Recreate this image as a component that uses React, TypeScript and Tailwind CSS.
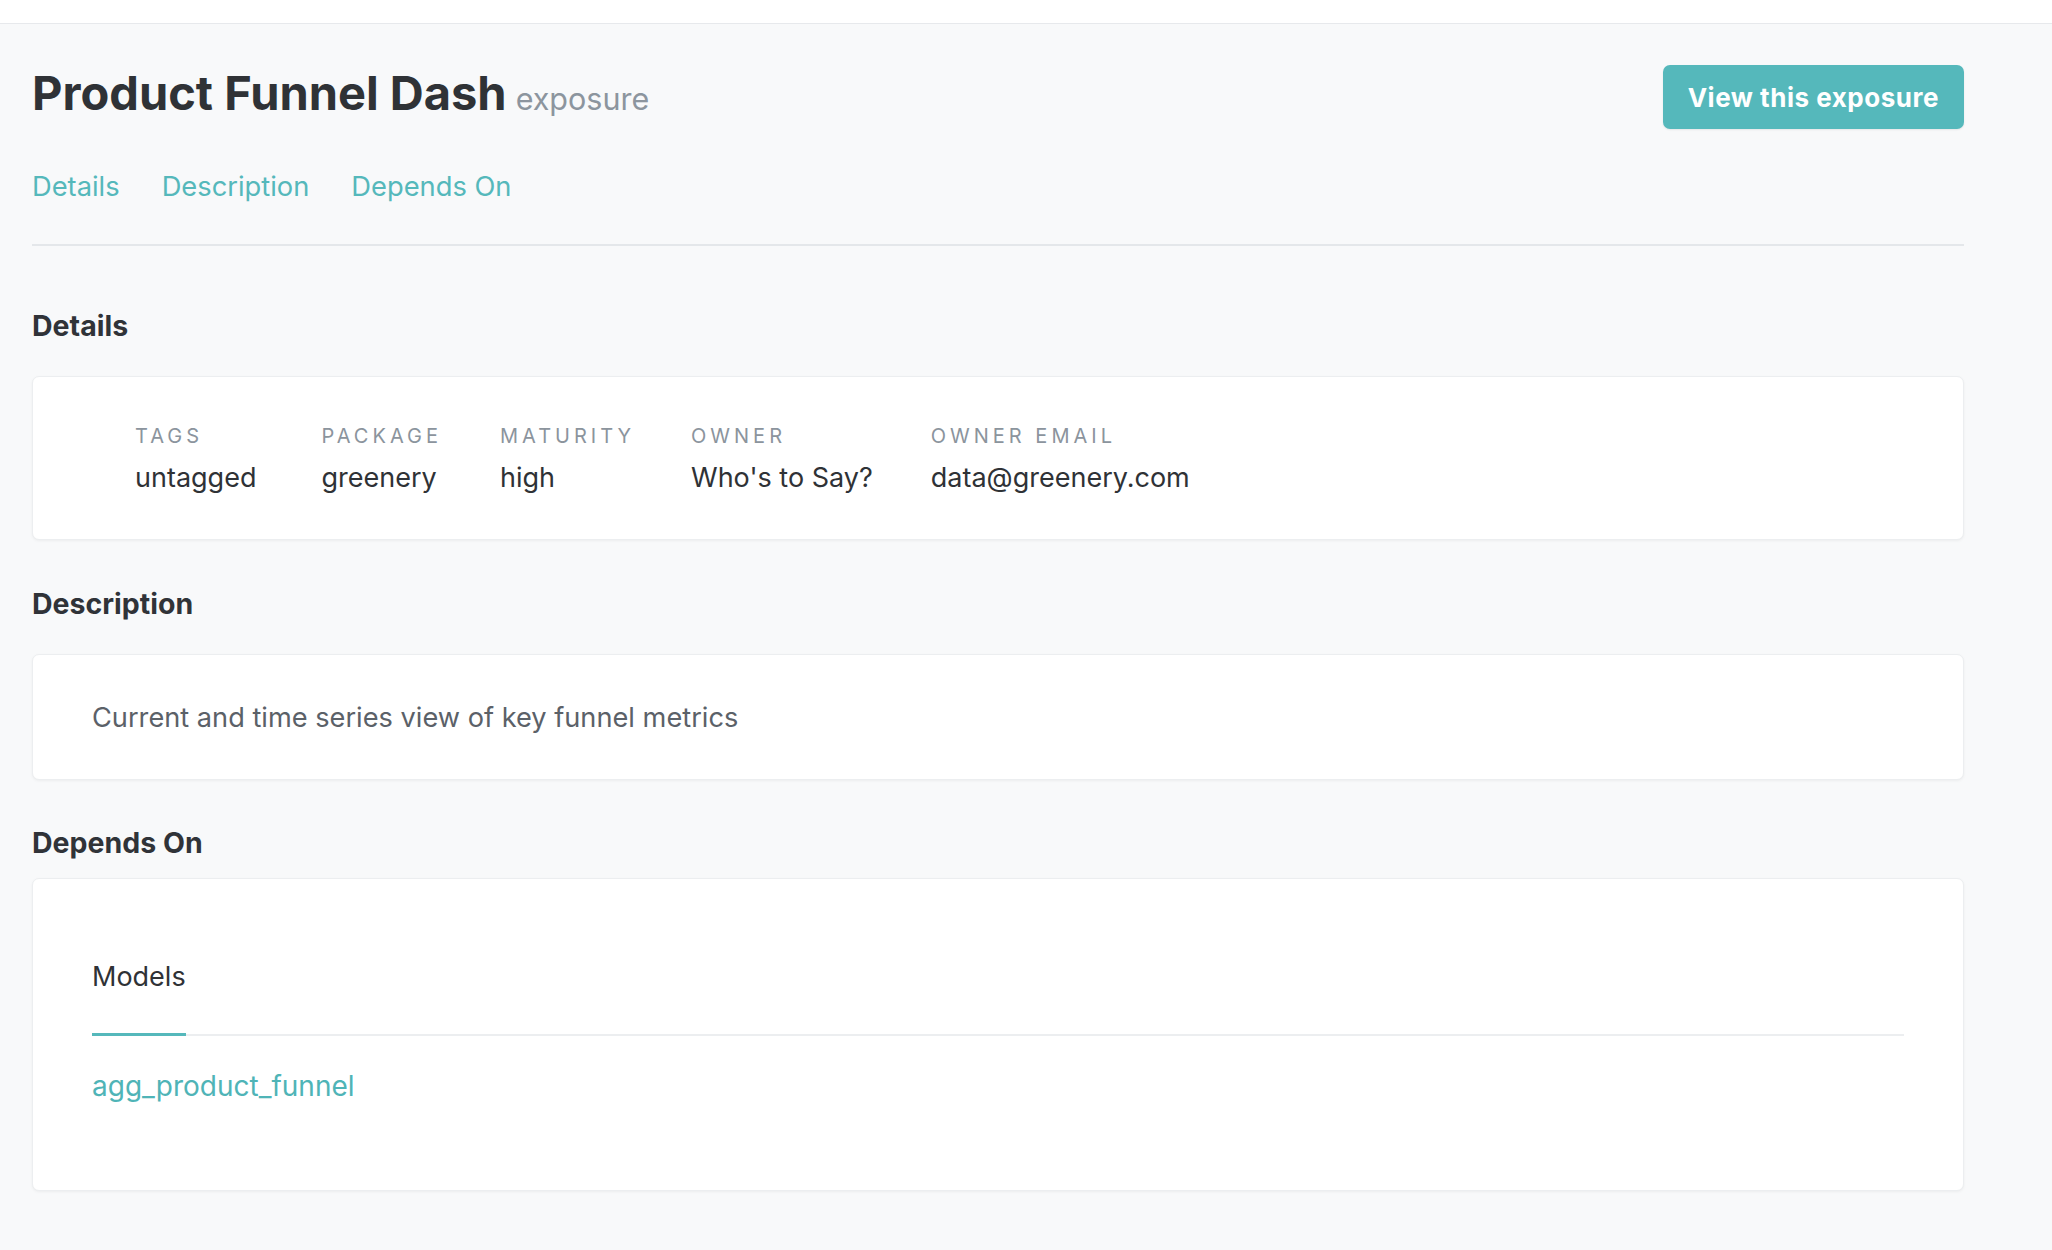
const details = [
  { label: 'Tags', value: 'untagged', gap: 'mr-[65px]' },
  { label: 'Package', value: 'greenery', gap: 'mr-[58px]' },
  { label: 'Maturity', value: 'high', gap: 'mr-[56px]' },
  { label: 'Owner', value: "Who's to Say?", gap: 'mr-[58px]' },
  { label: 'Owner Email', value: 'data@greenery.com', gap: 'mr-[58px]' },
]

const card = 'rounded-[7px] border border-[#eceef0] bg-white shadow-[0_1px_3px_rgba(0,0,0,0.05)]'

export default function App() {
  return (
    <div className="min-h-screen bg-[#f8f9fa] font-['Inter','Noto_Sans',sans-serif] text-[#303338]">
      <div className="h-[24px] border-b border-[#e7e9ec] bg-white" />

      <main className="pl-[32px] pr-[88px] pt-[41px] pb-[58px]">
        <header className="flex items-start justify-between">
          <div className="flex items-baseline gap-[9px]">
            <h1 className="text-[47px] leading-[56px] font-bold text-[#2f3236]">Product Funnel Dash</h1>
            <span className="text-[30.5px] leading-[40px] text-[#8c959e]">exposure</span>
          </div>
          <button className="h-[64px] rounded-[7px] bg-[#55b8bb] px-[25px] text-[26px] font-bold tracking-[0.02em] text-white shadow-[0_1px_2px_rgba(0,0,0,0.08)]">
            View this exposure
          </button>
        </header>

        <nav className="mt-[40px] flex gap-[42px] text-[27.3px] leading-[36px] text-[#55b8bb]">
          <a>Details</a>
          <a>Description</a>
          <a>Depends On</a>
        </nav>

        <div className="mt-[39px] h-[2px] bg-[#e4e7ea]" />

        <section className="mt-[64px]">
          <h2 className="text-[28.5px] leading-[32px] font-bold">Details</h2>
          <div className={`${card} mt-[34px] flex pl-[102px] pt-[45px] pb-[43px]`}>
            {details.map((d) => (
              <div key={d.label} className={d.gap}>
                <div className="text-[20px] leading-[28px] uppercase tracking-[0.2em] text-[#8b949d]">{d.label}</div>
                <div className="mt-[10px] text-[27px] leading-[36px] text-[#2f3236]">{d.value}</div>
              </div>
            ))}
          </div>
        </section>

        <section className="mt-[48px]">
          <h2 className="text-[28.5px] leading-[32px] font-bold">Description</h2>
          <div className={`${card} mt-[34px] px-[59px] pt-[45px] pb-[43px]`}>
            <p className="text-[27.2px] leading-[36px] text-[#5b6168]">Current and time series view of key funnel metrics</p>
          </div>
        </section>

        <section className="mt-[47px]">
          <h2 className="text-[28.5px] leading-[32px] font-bold">Depends On</h2>
          <div className={`${card} mt-[19px] px-[59px] pt-[80px] pb-[86px]`}>
            <div className="flex border-b-2 border-[#eceef0]">
              <div className="-mb-[2px] border-b-[3px] border-[#55b8bb] pb-[38px] text-[27px] leading-[36px] text-[#2f3236]">
                Models
              </div>
            </div>
            <a className="mt-[32px] block text-[28px] leading-[36px] text-[#4fb4b7]">agg_product_funnel</a>
          </div>
        </section>
      </main>
    </div>
  )
}
